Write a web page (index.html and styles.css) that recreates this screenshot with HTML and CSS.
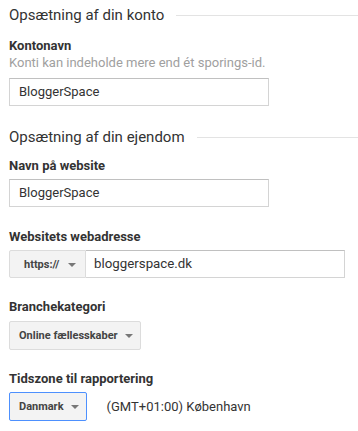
FILE: index.html
```html
<!DOCTYPE html>
<html lang="da">
<head>
<meta charset="utf-8">
<link rel="stylesheet" href="styles.css">
</head>
<body>
<div class="page">
  <div class="section-title first"><span>Opsætning af din konto</span><i class="rule"></i></div>
  <div class="label">Kontonavn</div>
  <div class="hint">Konti kan indeholde mere end ét sporings-id.</div>
  <div class="input w260 mt7">BloggerSpace</div>

  <div class="section-title second"><span>Opsætning af din ejendom</span><i class="rule"></i></div>
  <div class="label mt9">Navn på website</div>
  <div class="input w260 mt5">BloggerSpace</div>

  <div class="label mt21">Websitets webadresse</div>
  <div class="group mt5">
    <div class="btn btn-proto">https://<span class="caret"></span></div>
    <div class="input group-input">bloggerspace.dk</div>
  </div>

  <div class="label mt20">Branchekategori</div>
  <div class="row mt6">
    <div class="btn">Online fællesskaber<span class="caret"></span></div>
  </div>

  <div class="label mt20">Tidszone til rapportering</div>
  <div class="row mt5">
    <div class="btn btn-focus">Danmark<span class="caret"></span></div>
    <div class="tz">(GMT+01:00) København</div>
  </div>
</div>
</body>
</html>
```

FILE: styles.css
```css
html, body {
  margin: 0;
  padding: 0;
  background: #ffffff;
}
body {
  font-family: Roboto, "Liberation Sans", Arial, sans-serif;
  color: #333333;
}
.page {
  padding-left: 9px;
  width: 349px;
}
.section-title {
  display: flex;
  align-items: center;
  height: 22px;
  font-size: 15px;
  color: #333333;
  white-space: nowrap;
}
.section-title.first { margin-top: 4px; }
.section-title.second { margin-top: 20px; }
.rule {
  flex: 1;
  height: 1px;
  background: #e3e3e3;
  margin-left: 12px;
}
.label {
  font-size: 13px;
  font-weight: 700;
  line-height: 17px;
  color: #333333;
}
.section-title.first + .label { margin-top: 11px; }
.hint {
  font-size: 13px;
  line-height: 17px;
  color: #a0a0a0;
}
.input {
  box-sizing: border-box;
  height: 28px;
  border: 1px solid #d4d4d4;
  border-top-color: #c0c0c0;
  padding: 0 9px;
  font-size: 13px;
  line-height: 26px;
  color: #333333;
  background: #fff;
}
.w260 { width: 260px; }
.mt5 { margin-top: 5px; }
.mt6 { margin-top: 6px; }
.mt7 { margin-top: 7px; }
.mt9 { margin-top: 9px; }
.mt20 { margin-top: 20px; }
.mt21 { margin-top: 21px; }
.group {
  display: flex;
  width: 336px;
}
.group-input {
  flex: 1;
  border-left: none;
  font-size: 13.3px;
  padding-left: 8px;
}
.row {
  display: flex;
  align-items: center;
}
.btn {
  box-sizing: border-box;
  height: 29px;
  display: flex;
  align-items: center;
  padding: 0 7px 0 9px;
  border: 1px solid #dcdcdc;
  border-radius: 2px;
  background: #f3f3f3;
  font-size: 11px;
  font-weight: 700;
  color: #444444;
  white-space: nowrap;
}
.btn-proto {
  height: 28px;
  width: 77px;
  padding: 0 0 0 14px;
  border-radius: 2px 0 0 2px;
}
.btn-focus {
  border-color: #4d90fe;
}
.caret {
  display: inline-block;
  width: 0;
  height: 0;
  border-left: 4px solid transparent;
  border-right: 4px solid transparent;
  border-top: 4px solid #777777;
  margin-left: 7px;
  margin-top: 1px;
}
.btn-proto .caret { margin-left: 9px; }
.tz {
  margin-left: 20px;
  font-size: 13px;
  color: #333333;
}
```
